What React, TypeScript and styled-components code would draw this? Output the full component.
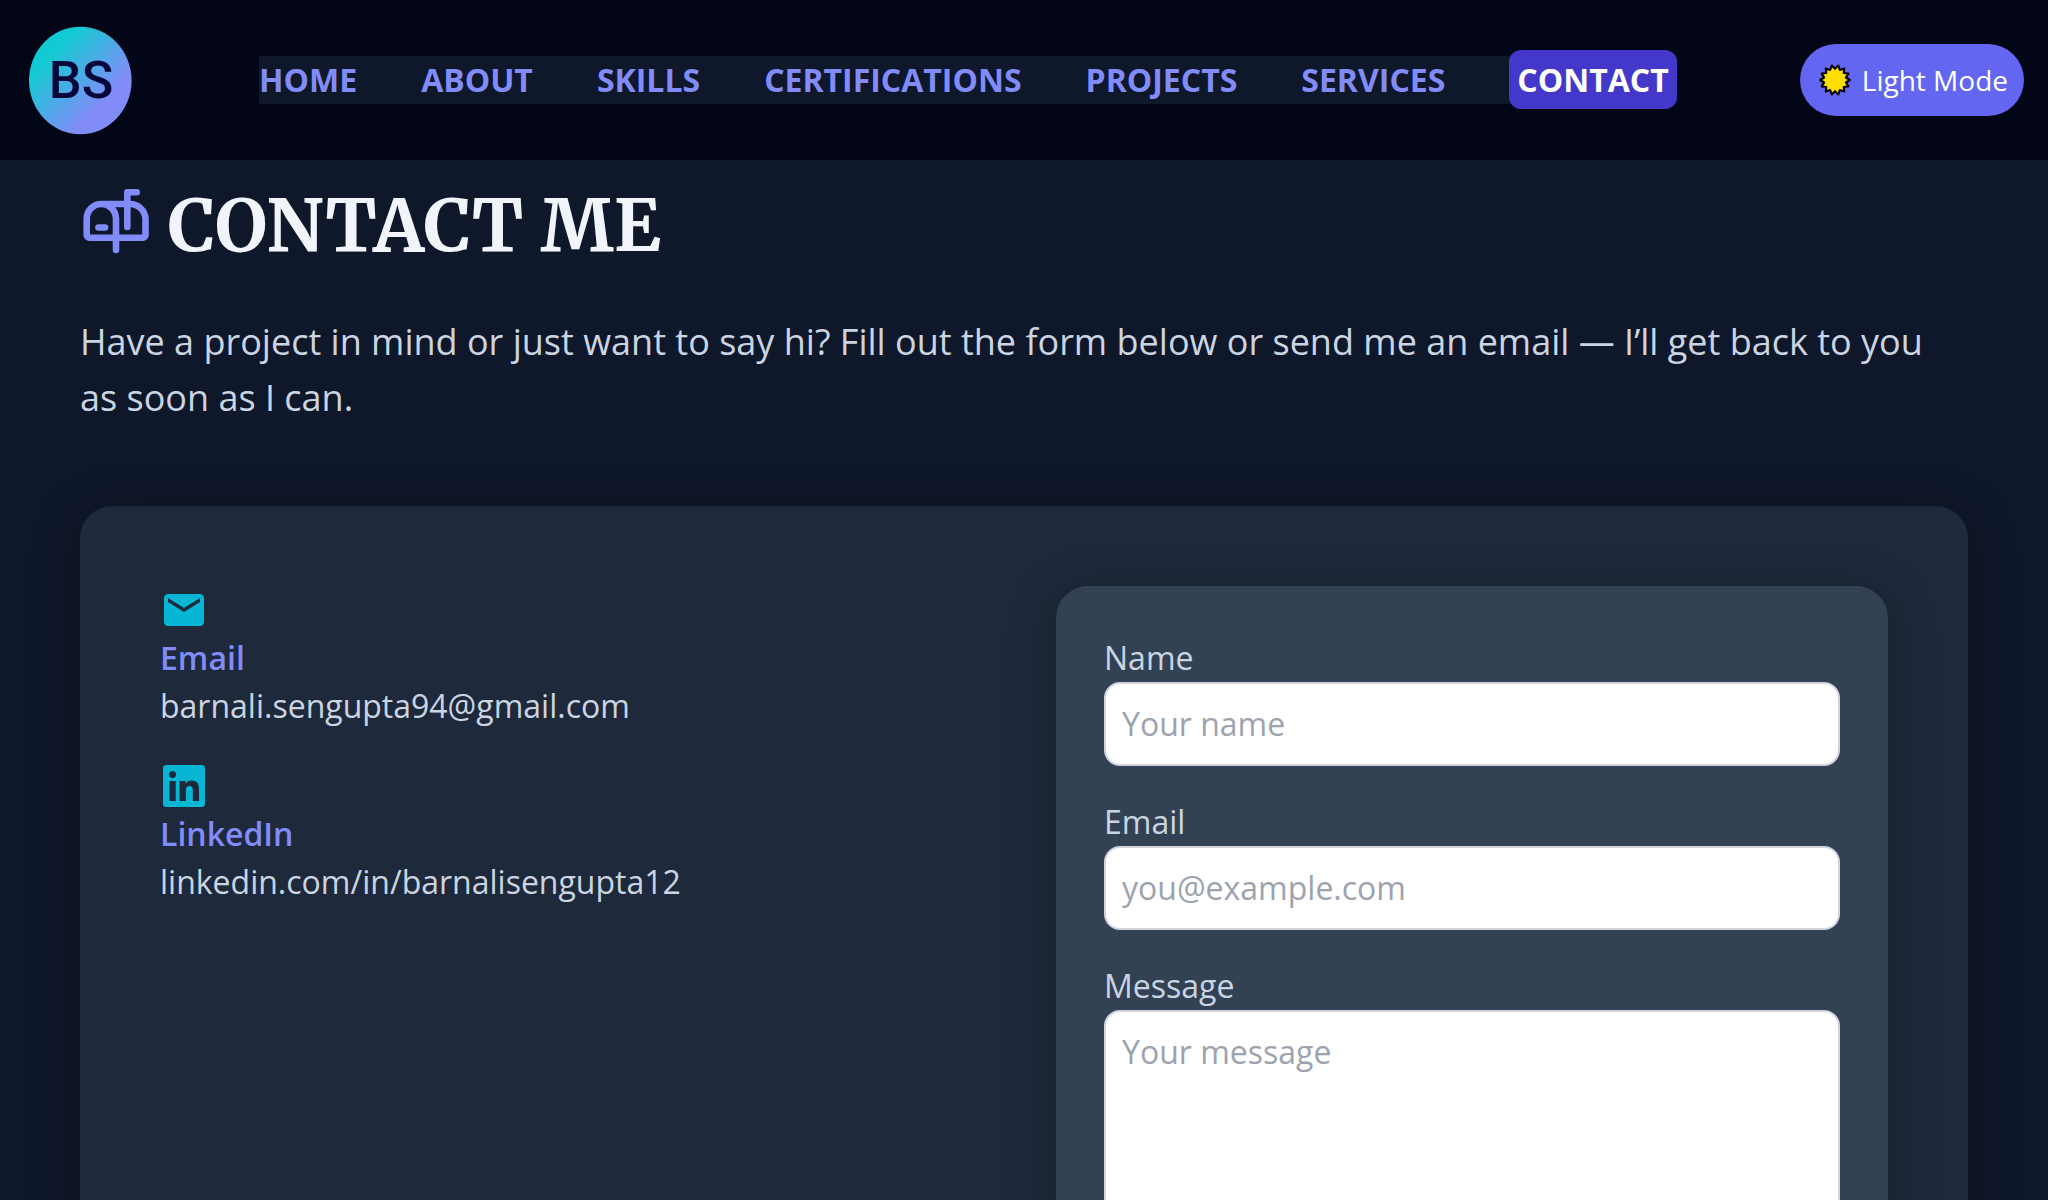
import React from "react";
import styled, { createGlobalStyle } from "styled-components";
import { MdEmail } from "react-icons/md";
import { FaLinkedin } from "react-icons/fa";

const GlobalStyle = createGlobalStyle`
  *, *::before, *::after { box-sizing: border-box; }
  body {
    margin: 0;
    background: #0f172a;
    color: #cbd5e1;
    font-family: "Open Sans", "Noto Sans", sans-serif;
    font-size: 32px;
    line-height: 48px;
  }
`;

const Header = styled.header`
  position: sticky;
  top: 0;
  z-index: 10;
  display: flex;
  align-items: center;
  justify-content: space-between;
  height: 160px;
  padding: 0 24px;
  background: #020617;
`;

const Logo = styled.svg`
  display: block;
  width: 112px;
  height: 112px;
`;

const NavList = styled.ul`
  display: flex;
  gap: 64px;
  margin: 0;
  padding: 0;
  list-style: none;
  background: #0f172a;
`;

const NavLink = styled.a<{ $active?: boolean }>`
  padding: ${(p) => (p.$active ? "8px" : "0")};
  border-radius: 12px;
  background: ${(p) => (p.$active ? "#4338ca" : "transparent")};
  color: ${(p) => (p.$active ? "#ffffff" : "#818cf8")};
  font-weight: 700;
  text-decoration: none;
`;

const ThemeButton = styled.button`
  display: flex;
  align-items: center;
  gap: 10px;
  height: 72px;
  padding: 0 16px 0 18px;
  border: 0;
  border-radius: 36px;
  background: #6366f1;
  color: #ffffff;
  font: 400 28px/40px "Open Sans", "Noto Sans", sans-serif;
  cursor: pointer;
`;

const Section = styled.section`
  padding: 26px 80px 80px;
`;

const Heading = styled.h1`
  display: flex;
  align-items: center;
  gap: 16px;
  margin: 0 0 48px;
  color: #f1f5f9;
  font: 700 72px/80px "Merriweather", "DejaVu Serif Condensed", serif;

  svg { color: #818cf8; }
`;

const Intro = styled.p`
  margin: 0 0 80px;
  font-size: 36px;
  line-height: 56px;
`;

const Card = styled.div`
  display: grid;
  grid-template-columns: 1fr 1fr;
  gap: 64px;
  padding: 80px;
  border-radius: 32px;
  background: #1e293b;
  box-shadow: 0 8px 48px rgba(0, 0, 0, 0.3);
`;

const Contacts = styled.div`
  display: flex;
  flex-direction: column;
  gap: 32px;
`;

const ContactName = styled.div`
  color: #818cf8;
  font-weight: 600;
`;

const ContactLink = styled.a`
  display: block;
  color: inherit;
  text-decoration: none;
`;

const ContactIcon = styled.div`
  display: flex;
  color: #06b6d4;
`;

const Form = styled.form`
  display: flex;
  flex-direction: column;
  gap: 32px;
  padding: 48px;
  border-radius: 32px;
  background: #334155;
  box-shadow: 0 8px 48px rgba(0, 0, 0, 0.3);
`;

const Label = styled.label`
  display: block;
  font-weight: 500;
  font-variation-settings: "wght" 500;
`;

const Input = styled.input`
  display: block;
  width: 100%;
  padding: 16px;
  border: 2px solid #d1d5db;
  border-radius: 16px;
  background: #ffffff;
  color: #0f172a;
  font: inherit;

  &::placeholder { color: #9ca3af; opacity: 1; }
`;

const TextArea = styled(Input)`
  resize: none;
`;

const SubmitButton = styled.button`
  padding: 16px;
  border: 0;
  border-radius: 16px;
  background: #6366f1;
  color: #ffffff;
  font: inherit;
`;

const links = ["Home", "About", "Skills", "Certifications", "Projects", "Services", "Contact"];

const SUN_RAYS = 14;
const sunPoints = Array.from({ length: SUN_RAYS * 2 }, (_, i) => {
  const r = i % 2 ? 11.2 : 14.8;
  const a = ((i + 1) * Math.PI) / SUN_RAYS;
  return `${17 + r * Math.sin(a)},${17 - r * Math.cos(a)}`;
}).join(" ");

function SunIcon() {
  return (
    <svg width="34" height="34" viewBox="0 0 34 34" aria-hidden="true">
      <polygon points={sunPoints} fill="#ffde00" stroke="#000" strokeWidth="2.1" strokeLinejoin="round" />
    </svg>
  );
}

function MailboxIcon() {
  return (
    <svg
      width="72"
      height="80"
      viewBox="0 0 72 80"
      fill="none"
      stroke="currentColor"
      strokeWidth="6.6"
      strokeLinecap="round"
      strokeLinejoin="round"
      aria-hidden="true"
    >
      <path d="M21.3 18H50a15.5 15.5 0 0 1 15.5 15.5V49a2.7 2.7 0 0 1-2.7 2.7H9.4A2.7 2.7 0 0 1 6.7 49V33A14.6 15 0 0 1 21.3 18A14.7 15 0 0 1 36 33V64" />
      <path d="M18.5 41.5H25" />
      <path d="M47.3 41V6.3H56.7" />
    </svg>
  );
}

function BrandLogo() {
  return (
    <Logo viewBox="0 0 112 112" role="img" aria-label="BS">
      <defs>
        <linearGradient id="brand" x1="0.24" y1="0.22" x2="0.72" y2="0.7">
          <stop offset="0" stopColor="#12cbd2" />
          <stop offset="1" stopColor="#818cf8" />
        </linearGradient>
      </defs>
      <ellipse cx="56.3" cy="56.5" rx="51.3" ry="53.8" fill="url(#brand)" />
      <text x="57" y="74" textAnchor="middle" fontFamily="Roboto, sans-serif" fontSize="52" fontWeight="500" fill="#06063a">BS</text>
    </Logo>
  );
}

export default function App() {
  return (
    <>
      <GlobalStyle />
      <Header>
        <BrandLogo />
        <nav>
          <NavList>
            {links.map((name) => (
              <li key={name}>
                <NavLink href={`#${name.toLowerCase()}`} $active={name === "Contact"}>
                  {name.toUpperCase()}
                </NavLink>
              </li>
            ))}
          </NavList>
        </nav>
        <ThemeButton type="button">
          <SunIcon />
          Light Mode
        </ThemeButton>
      </Header>
      <Section id="contact">
        <Heading>
          <MailboxIcon />
          CONTACT ME
        </Heading>
        <Intro>
          Have a project in mind or just want to say hi? Fill out the form below or send me an email — I’ll get back
          to you as soon as I can.
        </Intro>
        <Card>
          <Contacts>
            <div>
              <ContactIcon><MdEmail size={48} aria-hidden="true" /></ContactIcon>
              <ContactName>Email</ContactName>
              <ContactLink href="mailto:barnali.sengupta94@gmail.com">barnali.sengupta94@gmail.com</ContactLink>
            </div>
            <div>
              <ContactIcon><FaLinkedin size={48} aria-hidden="true" /></ContactIcon>
              <ContactName>LinkedIn</ContactName>
              <ContactLink href="#linkedin">linkedin.com/in/barnalisengupta12</ContactLink>
            </div>
          </Contacts>
          <Form>
            <div>
              <Label htmlFor="name">Name</Label>
              <Input id="name" type="text" placeholder="Your name" />
            </div>
            <div>
              <Label htmlFor="email">Email</Label>
              <Input id="email" type="email" placeholder="you@example.com" />
            </div>
            <div>
              <Label htmlFor="message">Message</Label>
              <TextArea as="textarea" id="message" rows={5} placeholder="Your message" />
            </div>
            <SubmitButton type="submit">Send Message</SubmitButton>
          </Form>
        </Card>
      </Section>
    </>
  );
}
